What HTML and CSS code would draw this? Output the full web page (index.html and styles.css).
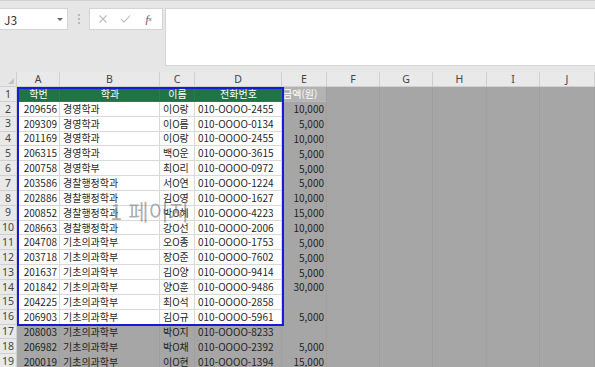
FILE: index.html
```html
<!DOCTYPE html>
<html lang="ko">
<head>
    <meta charset="UTF-8">
    <title>Excel - 페이지 나누기 미리 보기</title>
    <link rel="stylesheet" href="styles.css">
</head>
<body>
    <div class="toolbar">
        <div class="nameBox">
            <span>J3</span>
            <span class="caret"></span>
        </div>
        <div class="grip"><i></i><i></i><i></i></div>
        <div class="fxButtons">
            <span class="fxBtn">
                <svg width="10" height="10" viewBox="0 0 10 10"><path d="M1.5 1.5 L8.5 8.5 M8.5 1.5 L1.5 8.5" stroke="#bdbdbd" stroke-width="1.1" fill="none"/></svg>
            </span>
            <span class="fxBtn">
                <svg width="11" height="10" viewBox="0 0 11 10"><path d="M1 5.2 L4 8.2 L10 1.5" stroke="#bdbdbd" stroke-width="1.1" fill="none"/></svg>
            </span>
            <span class="fxBtn fxText">f<sub>x</sub></span>
        </div>
        <div class="formulaInput"></div>
    </div>

    <div class="sheetWrap">
        <div class="sheet" id="sheet">
            <div class="corner"><span></span></div>
        </div>
        <div class="sheet overlay">
            <div class="printFrame"></div>
            <div class="pageLabel">1 페이지</div>
        </div>
    </div>

    <script>
        var cols = ["A", "B", "C", "D", "E", "F", "G", "H", "I", "J"];
        var rows = [
            ["학번", "학과", "이름", "전화번호", "금액(원)"],
            ["209656", "경영학과", "이O랑", "010-OOOO-2455", "10,000"],
            ["209309", "경영학과", "이O름", "010-OOOO-0134", "5,000"],
            ["201169", "경영학과", "이O랑", "010-OOOO-2455", "10,000"],
            ["206315", "경영학과", "백O운", "010-OOOO-3615", "5,000"],
            ["200758", "경영학부", "최O리", "010-OOOO-0972", "5,000"],
            ["203586", "경찰행정학과", "서O연", "010-OOOO-1224", "5,000"],
            ["202886", "경찰행정학과", "김O영", "010-OOOO-1627", "10,000"],
            ["200852", "경찰행정학과", "박O혜", "010-OOOO-4223", "15,000"],
            ["208663", "경찰행정학과", "강O선", "010-OOOO-2006", "10,000"],
            ["204708", "기초의과학부", "오O종", "010-OOOO-1753", "5,000"],
            ["203718", "기초의과학부", "장O준", "010-OOOO-7602", "5,000"],
            ["201637", "기초의과학부", "김O양", "010-OOOO-9414", "5,000"],
            ["201842", "기초의과학부", "양O훈", "010-OOOO-9486", "30,000"],
            ["204225", "기초의과학부", "최O석", "010-OOOO-2858", ""],
            ["206903", "기초의과학부", "김O규", "010-OOOO-5961", "5,000"],
            ["208003", "기초의과학부", "박O지", "010-OOOO-8233", ""],
            ["206982", "기초의과학부", "박O채", "010-OOOO-2392", "5,000"],
            ["200019", "기초의과학부", "이O현", "010-OOOO-1394", "15,000"]
        ];

        var sheet = document.getElementById("sheet");

        function addCell(cls, text) {
            var div = document.createElement("div");
            div.className = cls;
            div.textContent = text || "";
            sheet.appendChild(div);
        }

        // column letters
        cols.forEach(function(c) {
            addCell("colHead", c);
        });

        rows.forEach(function(row, r) {
            addCell("rowHead", r + 1);
            for (var c = 0; c < cols.length; c++) {
                var inPrint = c < 4 && r < 16;
                var cls = "cell " + (inPrint ? "in" : "out");
                if (r === 0 && c < 4) cls += " title";
                if (r === 0 && c === 4) cls += " titleOut";
                if (r > 0 && (c === 0 || c === 4)) cls += " num";
                addCell(cls, row[c]);
            }
        });
    </script>
</body>
</html>
```

FILE: styles.css
```css
body {
    margin: 0;
    padding: 0;
    background-color: #e6e6e6;
    font-family: "Noto Sans CJK KR", "Noto Sans", sans-serif;
    width: 595px;
    height: 367px;
    overflow: hidden;
}

.toolbar {
    display: flex;
    align-items: flex-start;
    height: 72px;
    padding-top: 7px;
    box-sizing: border-box;
    border-top: 1px solid #d2d2d2;
}

.nameBox {
    width: 68px;
    height: 22px;
    background-color: #fff;
    border: 1px solid #d4d4d4;
    border-left: none;
    box-sizing: border-box;
    display: flex;
    align-items: center;
    justify-content: space-between;
    padding: 0 4px 0 4px;
    font-size: 12px;
    color: #333;
}

.caret {
    width: 0;
    height: 0;
    border-left: 3px solid transparent;
    border-right: 3px solid transparent;
    border-top: 3px solid #666;
}

.grip {
    width: 21px;
    height: 22px;
    display: flex;
    flex-direction: column;
    align-items: center;
    justify-content: center;
    gap: 2px;
}

.grip i {
    display: block;
    width: 2px;
    height: 2px;
    background-color: #b8b8b8;
}

.fxButtons {
    width: 74px;
    height: 22px;
    background-color: #fff;
    border: 1px solid #d4d4d4;
    box-sizing: border-box;
    display: flex;
    align-items: center;
    justify-content: space-around;
    padding: 0 2px;
}

.fxBtn {
    width: 20px;
    display: flex;
    justify-content: center;
    align-items: center;
}

.fxText {
    font-family: "Liberation Serif", serif;
    font-style: italic;
    font-size: 11px;
    color: #555;
}

.fxText sub {
    font-size: 7px;
}

.formulaInput {
    flex: 1;
    height: 58px;
    margin-left: 2px;
    background-color: #fff;
    border: 1px solid #d4d4d4;
    border-right: none;
    box-sizing: border-box;
}

.sheetWrap {
    display: grid;
}

.sheet {
    grid-area: 1 / 1;
    display: grid;
    grid-template-columns: 17px 43px 100px 35px 87px 45px 53px 53px 54px 53px 55px;
    grid-template-rows: 15px repeat(19, 14.85px);
    font-size: 10px;
    line-height: 1;
}

#sheet {
    background-color: #a6a6a6;
}

.overlay {
    pointer-events: none;
}

.corner {
    background-color: #e6e6e6;
    border-right: 1px solid #cfcfcf;
    border-bottom: 1px solid #cfcfcf;
    position: relative;
}

.corner span {
    position: absolute;
    right: 2px;
    bottom: 2px;
    width: 0;
    height: 0;
    border-left: 6px solid transparent;
    border-bottom: 6px solid #c3c3c3;
}

.colHead, .rowHead {
    background-color: #e9e9e9;
    color: #444;
    display: flex;
    align-items: center;
    justify-content: center;
    border-right: 1px solid #d0d0d0;
    border-bottom: 1px solid #d0d0d0;
    box-sizing: border-box;
    font-family: "Noto Sans", sans-serif;
    font-size: 10.5px;
}

.cell {
    display: flex;
    align-items: center;
    padding: 0 2px 0 3px;
    box-sizing: border-box;
    white-space: nowrap;
    overflow: visible;
    color: #1f1f1f;
}

.cell.in {
    background-color: #fff;
    border-right: 1px solid #d9d9d9;
    border-bottom: 1px solid #d9d9d9;
}

.cell.out {
    border-right: 1px solid #a0a0a0;
}

.cell.num {
    justify-content: flex-end;
}

.cell.title {
    background-color: #217346;
    color: #fff;
    justify-content: center;
    border-color: #2d7a4f;
}

.cell.titleOut {
    background-color: #b3b3b3;
    color: #fff;
    padding: 0 1px;
    justify-content: flex-start;
    border-bottom: 1px solid #b9b9b9;
}

.printFrame {
    grid-column: 2 / 6;
    grid-row: 2 / 18;
    border: 2px solid #1a1ad6;
    margin: 0 -2px -1px 0;
}

.pageLabel {
    grid-column: 2 / 6;
    grid-row: 2 / 18;
    display: flex;
    align-items: center;
    justify-content: center;
    font-size: 22px;
    color: rgba(120, 120, 120, 0.6);
    padding-top: 8px;
}
```
